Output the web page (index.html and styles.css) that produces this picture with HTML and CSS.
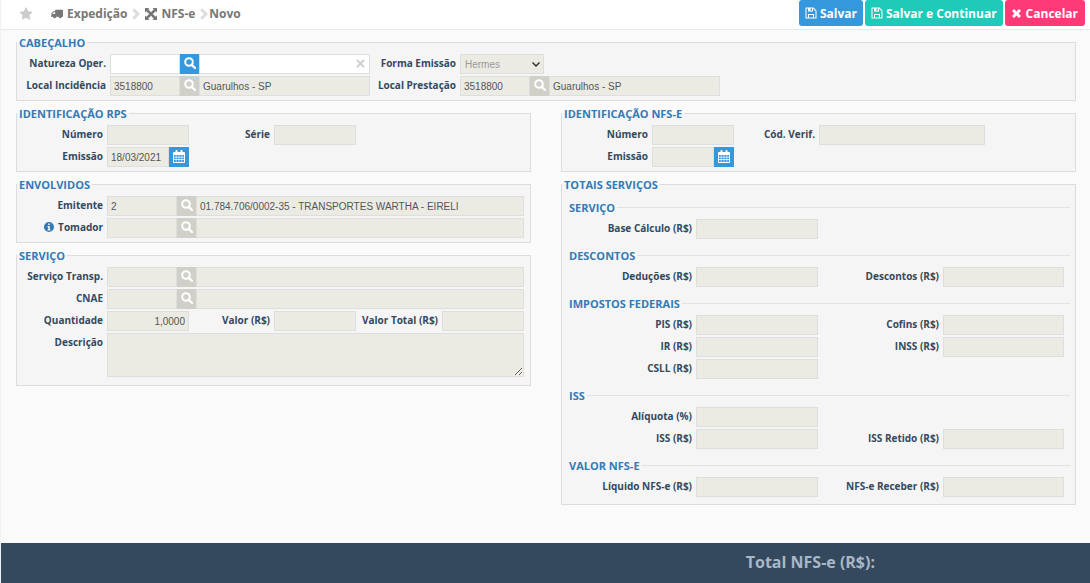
FILE: index.html
```html
<!DOCTYPE html>
<html lang="pt-BR">
<head>
<meta charset="utf-8">
<title>Expedição - NFS-e - Novo</title>
<link rel="stylesheet" href="styles.css">
</head>
<body>
<svg class="sprite" aria-hidden="true">
  <symbol id="search" viewBox="0 0 12 12"><circle cx="5" cy="5" r="3.800" fill="none" stroke="currentColor" stroke-width="2"/><path d="M7.800 7.800 11 11" fill="none" stroke="currentColor" stroke-width="2.400" stroke-linecap="round"/></symbol>
  <symbol id="star" viewBox="0 0 1792 1792"><path d="M1728 647q0 22-26 48l-363 354 86 500q1 7 1 20 0 21-10.500 35.500t-30.500 14.500q-19 0-40-12l-449-236-449 236q-22 12-40 12-21 0-31.500-14.500t-10.500-35.500q0-6 2-20l86-500-364-354q-25-27-25-48 0-37 56-46l502-73 225-455q19-41 49-41t49 41l225 455 502 73q56 9 56 46z"/></symbol>
  <symbol id="truck" viewBox="0 0 13 12"><path fill-rule="evenodd" d="M5 1.500h7.500q.5 0 .5.500v7h-1a2 2 0 0 1-3.900 0H5.900A2 2 0 0 1 2 9H0V8h.5V5.500q0-.4.300-.7l1.500-1.500Q2.600 3 3 3h1.500V2q0-.5.500-.5zM1.500 6h3V4H3.200L1.500 5.700z"/></symbol>
  <symbol id="arrows" viewBox="0 0 12 12"><path d="M0 0h4.500L3.200 1.300 6 4.200l2.800-2.900L7.500 0H12v4.500l-1.300-1.300L7.800 6l2.900 2.800L12 7.500V12H7.500l1.300-1.300L6 7.800l-2.800 2.900L4.500 12H0V7.500l1.300 1.300L4.200 6 1.300 3.200 0 4.500z"/></symbol>
  <symbol id="chevron" viewBox="0 0 8 12"><path d="M.2 2.300 2.300.3 8 6l-5.700 5.700L.2 9.700 3.900 6z"/></symbol>
  <symbol id="floppy" viewBox="0 0 12 12"><path fill-rule="evenodd" d="M.8.500h7.700l3 3v7.700q0 .3-.3.300H.8q-.3 0-.3-.3V.8Q.5.500.8.500zM1.500 1.500v9H3V7h6v3.500h1.500V4L8 1.500V4.500H3v-3zM5.500 1.500v2h1.500v-2zM4 8v2.500h4V8z"/></symbol>
  <symbol id="times" viewBox="0 0 10 10"><path d="M2.300 0 5 2.700 7.700 0 10 2.300 7.300 5 10 7.700 7.700 10 5 7.300 2.300 10 0 7.700 2.700 5 0 2.300z"/></symbol>
  <symbol id="calendar" viewBox="0 0 12 13"><path fill-rule="evenodd" d="M1 2h1.500V.8Q2.500 0 3.500 0t1 .8V2h3V.8q0-.8 1-.8t1 .8V2H11q1 0 1 1v9q0 1-1 1H1q-1 0-1-1V3q0-1 1-1zM1 5v1.700h1.800V5zM3.400 5v1.700h2.300V5zM6.300 5v1.700h2.300V5zM9.200 5v1.700H11V5zM1 7.400v1.800h1.800V7.400zM3.400 7.400v1.800h2.300V7.400zM6.300 7.400v1.800h2.300V7.400zM9.200 7.400v1.800H11V7.400zM1 9.900V12h1.800V9.900zM3.400 9.900V12h2.300V9.900zM6.300 9.900V12h2.300V9.900zM9.200 9.900V12H11V9.900z"/></symbol>
  <symbol id="info" viewBox="0 0 10 10"><path fill-rule="evenodd" d="M5 0a5 5 0 1 1 0 10A5 5 0 0 1 5 0zM4.200 1.500V3h1.600V1.500zM3.500 4v1h.7v2.500h-.7v1h3v-1h-.7V4z"/></symbol>
</svg>

<header class="topbar">
  <nav class="crumbs" aria-label="Navegação">
    <button class="favorite" type="button" aria-label="Favorito"><svg class="icon-m"><use href="#star"/></svg></button>
    <a href="#"><svg class="icon-truck"><use href="#truck"/></svg>Expedição</a>
    <svg class="sep"><use href="#chevron"/></svg>
    <a href="#"><svg class="icon-m"><use href="#arrows"/></svg>NFS-e</a>
    <span class="current"><svg class="sep"><use href="#chevron"/></svg>Novo</span>
  </nav>
  <div class="actions">
    <button class="btn blue" type="button"><svg class="icon-m"><use href="#floppy"/></svg>Salvar</button>
    <button class="btn green" type="button"><svg class="icon-m"><use href="#floppy"/></svg>Salvar e Continuar</button>
    <button class="btn pink" type="button"><svg class="icon-s"><use href="#times"/></svg>Cancelar</button>
  </div>
</header>

<main class="form">
  <fieldset class="panel">
    <legend>CABEÇALHO</legend>
    <div class="grid head">
      <label for="nat">Natureza Oper.</label>
      <div class="lookup open"><input id="nat" class="code"><button type="button" aria-label="Pesquisar"><svg class="icon-m"><use href="#search"/></svg></button><div class="clearable"><input aria-label="Natureza"><button class="clear" type="button" aria-label="Limpar"><svg class="icon-x" viewBox="0 0 10 10"><path d="M1 1l8 8M9 1 1 9"/></svg></button></div></div>
      <label for="forma">Forma Emissão</label>
      <div class="select"><select id="forma" disabled><option>Hermes</option></select><svg class="caret" viewBox="0 0 8 5"><path d="M.5.500 4 4 7.500.5"/></svg></div>
      <label class="first" for="inc">Local Incidência</label>
      <div class="lookup"><input id="inc" class="code" value="3518800" readonly><button type="button" aria-label="Pesquisar" disabled><svg class="icon-m"><use href="#search"/></svg></button><input aria-label="Cidade de incidência" value="Guarulhos - SP" readonly></div>
      <label for="pre">Local Prestação</label>
      <div class="lookup"><input id="pre" class="code" value="3518800" readonly><button type="button" aria-label="Pesquisar" disabled><svg class="icon-m"><use href="#search"/></svg></button><input aria-label="Cidade de prestação" value="Guarulhos - SP" readonly></div>
    </div>
  </fieldset>

  <div class="columns">
    <div class="column">
      <fieldset class="panel">
        <legend>IDENTIFICAÇÃO RPS</legend>
        <div class="grid six">
          <label for="rnum">Número</label><input id="rnum" readonly>
          <label for="rser">Série</label><input id="rser" readonly>
          <label class="first" for="remi">Emissão</label>
          <div class="lookup date"><input id="remi" value="18/03/2021" readonly><button type="button" aria-label="Calendário"><svg class="icon-cal"><use href="#calendar"/></svg></button></div>
        </div>
      </fieldset>
      <fieldset class="panel">
        <legend>ENVOLVIDOS</legend>
        <div class="grid six">
          <label for="emi">Emitente</label>
          <div class="lookup wide"><input id="emi" class="code" value="2" readonly><button type="button" aria-label="Pesquisar" disabled><svg class="icon-m"><use href="#search"/></svg></button><input aria-label="Nome do emitente" value="01.784.706/0002-35 - TRANSPORTES WARTHA - EIRELI" readonly></div>
          <label class="first" for="tom"><svg class="icon-info"><use href="#info"/></svg>Tomador</label>
          <div class="lookup wide"><input id="tom" class="code" readonly><button type="button" aria-label="Pesquisar" disabled><svg class="icon-m"><use href="#search"/></svg></button><input aria-label="Nome do tomador" readonly></div>
        </div>
      </fieldset>
      <fieldset class="panel service">
        <legend>SERVIÇO</legend>
        <div class="grid six">
          <label for="srv">Serviço Transp.</label>
          <div class="lookup wide"><input id="srv" class="code" readonly><button type="button" aria-label="Pesquisar" disabled><svg class="icon-m"><use href="#search"/></svg></button><input aria-label="Descrição do serviço" readonly></div>
          <label class="first" for="cnae">CNAE</label>
          <div class="lookup wide"><input id="cnae" class="code" readonly><button type="button" aria-label="Pesquisar" disabled><svg class="icon-m"><use href="#search"/></svg></button><input aria-label="Descrição do CNAE" readonly></div>
          <label class="first" for="qtd">Quantidade</label><input id="qtd" class="number" value="1,0000" readonly>
          <label for="val">Valor (R$)</label><input id="val" class="number" readonly>
          <label for="tot">Valor Total (R$)</label><input id="tot" class="number" readonly>
          <label class="first" for="desc">Descrição</label><textarea id="desc" class="wide" readonly></textarea>
        </div>
      </fieldset>
    </div>

    <div class="column">
      <fieldset class="panel">
        <legend>IDENTIFICAÇÃO NFS-E</legend>
        <div class="grid nfse">
          <label for="nnum">Número</label><input id="nnum" readonly>
          <label for="ncod">Cód. Verif.</label><input id="ncod" readonly>
          <label class="first" for="nemi">Emissão</label>
          <div class="lookup date"><input id="nemi" readonly><button type="button" aria-label="Calendário"><svg class="icon-cal"><use href="#calendar"/></svg></button></div>
        </div>
      </fieldset>
      <fieldset class="panel totals">
        <legend>TOTAIS SERVIÇOS</legend>
        <fieldset class="group">
          <legend>SERVIÇO</legend>
          <div class="grid four"><label for="t1">Base Cálculo (R$)</label><input id="t1" readonly></div>
        </fieldset>
        <fieldset class="group">
          <legend>DESCONTOS</legend>
          <div class="grid four"><label for="t2">Deduções (R$)</label><input id="t2" readonly><label for="t3">Descontos (R$)</label><input id="t3" readonly></div>
        </fieldset>
        <fieldset class="group">
          <legend>IMPOSTOS FEDERAIS</legend>
          <div class="grid four"><label for="t4">PIS (R$)</label><input id="t4" readonly><label for="t5">Cofins (R$)</label><input id="t5" readonly>
          <label for="t6">IR (R$)</label><input id="t6" readonly><label for="t7">INSS (R$)</label><input id="t7" readonly>
          <label for="t8">CSLL (R$)</label><input id="t8" readonly></div>
        </fieldset>
        <fieldset class="group">
          <legend>ISS</legend>
          <div class="grid four"><label for="t9">Alíquota (%)</label><input id="t9" readonly>
          <label class="first" for="t10">ISS (R$)</label><input id="t10" readonly><label for="t11">ISS Retido (R$)</label><input id="t11" readonly></div>
        </fieldset>
        <fieldset class="group">
          <legend>VALOR NFS-E</legend>
          <div class="grid four"><label for="t12">Líquido NFS-e (R$)</label><input id="t12" readonly><label for="t13">NFS-e Receber (R$)</label><input id="t13" readonly></div>
        </fieldset>
      </fieldset>
    </div>
  </div>
</main>

<footer class="total">Total NFS-e (R$):</footer>
</body>
</html>
```
FILE: styles.css
```css
* { box-sizing: border-box; }
body {
  margin: 0;
  min-height: 100vh;
  display: flex;
  flex-direction: column;
  border-left: 1px solid #edf2f7;
  background: #fafafa;
  color: #34495e;
  font-family: "Open Sans", sans-serif;
}
svg { display: block; flex: none; fill: currentColor; }
.sprite { display: none; }
.icon-m { width: 12px; height: 12px; }
.icon-s { width: 9px; height: 9px; }
.icon-truck { width: 12px; height: 12px; }
.icon-cal { width: 12px; height: 13px; }
.icon-info { width: 10px; height: 10px; margin-right: 4px; color: #337ab7; }
button { border: 0; padding: 0; margin: 0; background: none; color: inherit; font: inherit; }

.topbar {
  display: flex;
  justify-content: space-between;
  align-items: flex-start;
  height: 30px;
  padding: 0 5px 0 18px;
  background: #fff;
  border-bottom: 1px solid #e9e9e9;
}
.crumbs {
  display: flex;
  align-items: center;
  gap: 5px;
  height: 28px;
  padding-bottom: 1px;
  color: #777;
  font-size: 12px;
  font-weight: 700;
}
.crumbs a { display: flex; align-items: center; gap: 4px; color: inherit; text-decoration: none; }
.current { display: flex; align-items: center; gap: 1px; }
.favorite { margin-right: 13px; color: #ccc; }
.favorite svg { width: 14px; height: 14px; }
.sep { width: 8px; height: 12px; color: #ddd; }
.actions { display: flex; gap: 2px; }
.btn {
  display: flex;
  align-items: center;
  gap: 3px;
  height: 26px;
  padding: 0 6px;
  border-radius: 3px;
  color: #fff;
  font-size: 12px;
  font-weight: 700;
}
.blue { background: #3598dc; }
.green { background: #1fcab8; }
.pink { background: #ff3a77; gap: 5px; padding: 0 7px; }

.form { flex: 1; display: flex; flex-direction: column; gap: 5px; padding: 5px 14px 16px 15px; }
.columns { display: grid; grid-template-columns: minmax(0, 1fr) minmax(0, 1fr); gap: 30px; align-items: start; }
.column { display: flex; flex-direction: column; gap: 5px; }
.panel, .group { margin: 0; min-width: 0; }
.panel { padding: 4px 0 4px; border: 1px solid #dcdcdc; background: #f5f5f5; }
.panel.service { padding-bottom: 8px; }
.panel.totals { padding: 8px 0 7px; }
.group { margin: 0 5px; padding: 4px 6px 0 0; border: 0 solid #e0e0e5; border-top-width: 1px; }
.group + .group { margin-top: 9px; }
legend {
  height: 15px;
  padding: 0 2px;
  color: #337ab7;
  font-size: 11px;
  line-height: 15px;
  font-weight: 700;
}

.grid { display: grid; gap: 2px 4px; }
.head { grid-template-columns: 89fr 260fr 82fr 260fr 351fr; }
.six { grid-template-columns: 86fr 82fr 77fr 82fr 78fr 82fr; padding-right: 6px; }
.nfse { grid-template-columns: 86fr 82fr 77fr 166fr 86fr; }
.four { grid-template-columns: 125fr 122fr 117fr 121fr; }
.first { grid-column: 1; }
.wide { grid-column: 2 / -1; }
label {
  display: flex;
  justify-content: flex-end;
  align-items: center;
  height: 20px;
  padding-bottom: 2px;
  font-size: 10px;
  font-weight: 700;
  white-space: nowrap;
}
input, select, textarea {
  width: 100%;
  min-width: 0;
  height: 20px;
  margin: 0;
  padding: 1px 3px 0;
  border: 1px solid #dedede;
  border-radius: 0;
  background: #ebebe4;
  color: #555;
  font-family: "Liberation Sans", Arial, sans-serif;
  font-size: 10px;
}
.number { text-align: right; }
textarea { display: block; height: 44px; resize: vertical; }
.lookup { display: flex; min-width: 0; }
.lookup .code { flex: none; width: 70px; }
.lookup > button {
  flex: none;
  display: grid;
  place-items: center;
  width: 19px;
  height: 20px;
  padding-bottom: 2px;
  background: #3598dc;
  color: #fff;
}
.lookup.date > button { width: 20px; }
.lookup > button:disabled { background: #d0cfc8; }
.open input { background: #fff; }
.clearable { position: relative; display: flex; flex: 1; min-width: 0; }
.clear { position: absolute; top: 5px; right: 5px; color: #ccc; }
.icon-x { width: 9px; height: 9px; fill: none; stroke: currentColor; stroke-width: 2; }
.select { position: relative; display: flex; width: 84px; }
select { appearance: none; padding: 0 4px; color: #999; opacity: 1; }
.caret { position: absolute; top: 8px; right: 4px; width: 8px; height: 5px; fill: none; stroke: #333; stroke-width: 1.500; }

.total {
  height: 40px;
  padding-right: 215px;
  background: #34495e;
  color: #a9b7c6;
  font-size: 16px;
  font-weight: 700;
  line-height: 38px;
  text-align: right;
}
```
